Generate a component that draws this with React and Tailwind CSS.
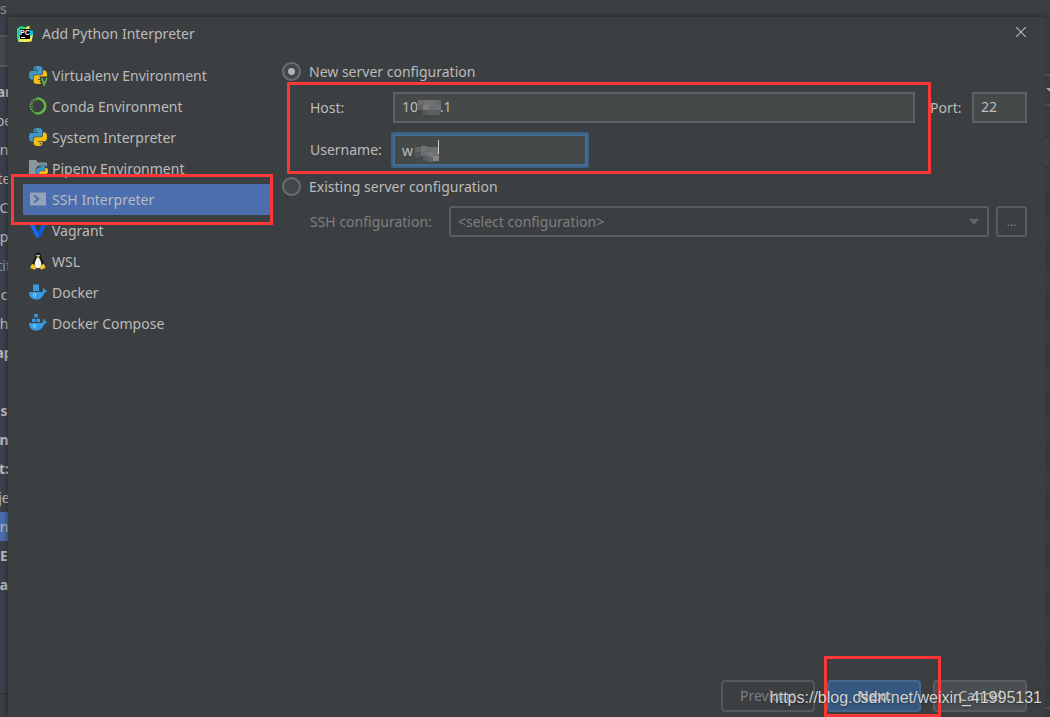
import React from "react"
import clsx from "clsx"

const PYTHON_HALF =
  "M14.25.18l.9.2.73.26.59.3.45.32.34.34.25.34.16.33.1.3.04.26.02.2-.01.13V8.5l-.05.63-.13.55-.21.46-.26.38-.3.31-.33.25-.35.19-.35.14-.33.1-.3.07-.26.04-.21.02H8.77l-.69.05-.59.14-.5.22-.41.27-.33.32-.27.35-.2.36-.15.37-.1.35-.07.32-.04.27-.02.21v3.06H3.17l-.21-.03-.28-.07-.32-.12-.35-.18-.36-.26-.36-.36-.35-.46-.32-.59-.28-.73-.21-.88-.14-1.05-.05-1.23.06-1.22.16-1.04.24-.87.32-.71.36-.57.4-.44.42-.33.42-.24.4-.16.36-.1.32-.05.24-.01h.16l.06.01h8.16v-.83H6.18l-.01-2.75-.02-.37.05-.34.11-.31.17-.28.25-.26.31-.23.38-.2.44-.18.51-.15.58-.12.64-.1.71-.06.77-.04.84-.02 1.27.05zm-6.3 1.98l-.23.33-.08.41.08.41.23.34.33.22.41.09.41-.09.33-.22.23-.34.08-.41-.08-.41-.23-.33-.33-.22-.41-.09-.41.09z"

const PythonMark = () => (
  <>
    <path d={PYTHON_HALF} fill="#4295c4" />
    <path d={PYTHON_HALF} fill="#f2bf12" transform="rotate(180 12 12)" />
  </>
)

const PythonIcon = () => (
  <svg viewBox="0 0 24 24" className="size-[18px]">
    <PythonMark />
  </svg>
)

const VirtualenvIcon = () => (
  <svg viewBox="0 0 18 18" className="size-[18px] overflow-visible">
    <g transform="scale(.75)">
      <PythonMark />
    </g>
    <path d="M10.4 10.5h8v8.5h-6z" fill="#3c3f41" />
    <path d="M12.6 12l2.6 6.6L17.9 12" fill="none" stroke="#62b543" strokeWidth="1.6" />
  </svg>
)

const CondaIcon = () => (
  <svg viewBox="0 0 18 18" className="size-[18px]" fill="none" stroke="#62b543">
    <path d="M8 1.6A7.4 7.4 0 1 1 6 15.8" strokeWidth="2.4" />
    <path d="M8 1.6A7.4 7.4 0 0 0 6 15.8" strokeWidth="1.6" strokeDasharray="1.7 .9" />
    <path d="M8 3.6A5.4 5.4 0 0 0 6 13.7" strokeWidth="1" strokeDasharray="1.2 1.2" />
  </svg>
)

const PipenvIcon = () => (
  <svg viewBox="0 0 18 18" className="size-[18px] overflow-visible">
    <path d="M0 1h7l2 2.5h9V16H0z" fill="#8c979e" />
    <circle cx="13" cy="12" r="6.5" fill="#3c3f41" />
    <g transform="translate(7 6) scale(.5)">
      <PythonMark />
    </g>
  </svg>
)

const SshIcon = () => (
  <svg viewBox="0 0 18 18" className="size-[18px]">
    <path d="M1 2.5h16v13H1z" fill="#93a2b8" />
    <path d="M5.2 5.5L9.2 9l-4 3.5" fill="none" stroke="#4b6eaf" strokeWidth="2" />
  </svg>
)

const VagrantIcon = () => (
  <svg viewBox="0 0 18 18" className="size-[18px]">
    <path d="M1 1.5L5.5 1v3L9 11.5 12.5 4V1L17 1.5V4l-5.5 11.5L9 17l-2.5-1.5L1 4z" fill="#1868f2" />
    <path d="M9 11.5L12.5 4V2.5L17 1.5V4l-5.5 11.5L9 17z" fill="#1459c9" />
  </svg>
)

const LinuxIcon = () => (
  <svg viewBox="0 0 18 18" className="size-[18px]">
    <path d="M9 .3c2 0 3 1.3 3 3.2 0 2.3.8 3 1.9 5 1 1.9 1.3 4 .4 6L9 16.8 3.7 14.5c-.9-2-.4-4.2.6-6C5.3 6.6 6 5.7 6 3.5 6 1.6 7 .3 9 .3z" fill="#17191a" />
    <path d="M9 5.800c1.400 0 1.800 1.200 2.500 2.900.8 1.900 1.200 3.600.6 5.300-.5 1.500-1.600 2.200-3.100 2.200s-2.600-.7-3.100-2.200c-.6-1.700-.2-3.400.6-5.300C7.200 7 7.600 5.800 9 5.800z" fill="#f4f4f4" />
    <circle cx="8" cy="3.600" r=".8" fill="#eee" />
    <circle cx="10" cy="3.600" r=".8" fill="#eee" />
    <path d="M7.300 5.100L9 4.300l1.700.8L9 6.300z" fill="#f8c22c" />
    <path d="M3.500 11.800l1.600.9 2 2.800c.3 1.200-.6 2.100-1.900 1.900l-3.700-1.100.2-2.500z" fill="#f8c22c" />
    <path d="M14.500 11.800l-1.600.9-1.800 2.800c-.3 1.200.6 2.100 1.800 1.900l3.600-1.600-.6-2z" fill="#f8c22c" />
  </svg>
)

const Whale = () => (
  <>
    <path d="M0 9h13.500c.7-.7.700-2.200.2-3.200l1-.8c.8.700 1.300 1.500 1.300 2.400.7-.1 1.600 0 2.200.4-.5 1-1.400 1.500-2.700 1.600C14.300 13.500 11.500 16.500 7 16.500 2.500 16.500 0 13.500 0 9z" fill="#369be6" />
    <ellipse cx="5.500" cy="12" rx="1.100" ry="1.600" fill="none" stroke="#a9d4ee" strokeWidth=".9" />
  </>
)

const DockerIcon = () => (
  <svg viewBox="0 0 18 18" className="size-[18px]">
    <path d="M4 1.500h6V8H4z" fill="#369be6" />
    <Whale />
  </svg>
)

const ComposeIcon = () => (
  <svg viewBox="0 0 18 18" className="size-[18px]">
    <path d="M5.200 0h3.600v3.300H5.200zM3 4.700h3.500V8H3zM7.500 4.700H11V8H7.500z" fill="#369be6" />
    <Whale />
  </svg>
)

const PyCharmIcon = () => (
  <svg viewBox="0 0 16 16" className="size-4">
    <path d="M0 2.500L4 0l6 1.500L14 6l-2 9.500L2 16 0 12z" fill="#21d789" />
    <path d="M10 .5L12.500 0v3L16 9l-1.500 6.500L8 16l-7-.5L3 11z" fill="#f4f052" />
    <path d="M12.500 4L16 5v4l-3 1z" fill="#07c3f2" />
    <path d="M3 3h10v10H3z" fill="#000" />
    <text x="3" y="9" fontSize="7" fontWeight="700" fill="#fff" fontFamily="Liberation Sans, sans-serif">PC</text>
    <path d="M4 11h4v1H4z" fill="#fff" />
  </svg>
)

const CloseIcon = () => (
  <svg viewBox="0 0 10 10" className="size-[10px]" stroke="#bbbbbb" strokeWidth="1.1">
    <path d="M0 0l10 10M10 0L0 10" />
  </svg>
)

// Red frame drawn over the part of the dialog the reader should look at
const Highlight = ({ className }) => (
  <span className={clsx("pointer-events-none absolute z-10 border-3 border-[#fb3837]", className)} />
)

const environments = [
  { label: "Virtualenv Environment", icon: VirtualenvIcon },
  { label: "Conda Environment", icon: CondaIcon },
  { label: "System Interpreter", icon: PythonIcon },
  { label: "Pipenv Environment", icon: PipenvIcon },
  { label: "SSH Interpreter", icon: SshIcon, selected: true },
  { label: "Vagrant", icon: VagrantIcon },
  { label: "WSL", icon: LinuxIcon },
  { label: "Docker", icon: DockerIcon },
  { label: "Docker Compose", icon: ComposeIcon },
]

const settingsTree = [
  { text: "ar", bold: true },
  { text: "be" },
  { text: "n" },
  { text: "te" },
  { text: "C" },
  { text: "p" },
  { text: "tif", link: true },
  { text: "c" },
  { text: "h" },
  { text: "ap", bold: true },
  { text: "" },
  { text: "s", bold: true },
  { text: "n", bold: true },
  { text: "t:", bold: true },
  { text: "je" },
  { text: "n", selected: true },
  { text: "E", bold: true },
  { text: "a", bold: true },
]

const SettingsEdge = () => (
  <aside className="flex w-2 shrink-0 flex-col overflow-hidden bg-[#3d414b]">
    <div className="mt-[18px] h-8 border-y-2 border-[#55585a] bg-[#45494a]" />
    <ul className="mt-2.5 flex-1">
      {settingsTree.map((row, i) => (
        <li
          key={i}
          className={clsx(
            "flex h-[29px] items-center justify-center",
            row.bold && "font-bold",
            row.link && "text-[#6f9fd0]",
            row.selected && "bg-[#4b6eaf]"
          )}
        >
          {row.text}
        </li>
      ))}
    </ul>
    <div className="h-6 border-t border-[#2f3133] bg-[#3c3f41]" />
  </aside>
)

const PackagesEdge = () => (
  <aside className="flex w-[5px] shrink-0 flex-col overflow-hidden bg-[#383b3d] pt-[57px]">
    <div className="flex h-8 shrink-0 items-center justify-end border-y-2 border-[#4b4e50]">
      <svg viewBox="0 0 4 4" className="size-1" fill="#a0a2a4">
        <path d="M0 0h4v4z" />
      </svg>
    </div>
    <div className="mt-[30px] h-8 shrink-0 border-y border-[#2d2f31] bg-[#3c3f41]" />
    <div className="flex-1 bg-[repeating-linear-gradient(#393c3e_0px,#393c3e_25px,#353739_25px,#353739_50px)]" />
    <div className="h-[45px] shrink-0 border-t border-[#2d2f31]">
      <div className="mt-5 border-t border-[#2d2f31]" />
      <div className="mt-[13px] border-t-2 border-[#4b4e50]" />
    </div>
  </aside>
)

const Sidebar = () => (
  <nav className="w-[247px] shrink-0">
    <ul>
      {environments.map(({ label, icon: Icon, selected }) => (
        <li key={label} className="relative">
          <button
            type="button"
            className={clsx(
              "flex h-[31px] w-full items-center gap-[5px] pl-1.5 [&>svg]:mb-px",
              selected && "bg-[#4b6eaf]"
            )}
          >
            <Icon />
            {label}
          </button>
          {selected && <Highlight className="-inset-y-[10px] -left-3 -right-[3px]" />}
        </li>
      ))}
    </ul>
  </nav>
)

const Radio = ({ id, label, defaultChecked }) => (
  <div className="flex h-[23px] items-center gap-2">
    <input
      type="radio"
      name="server"
      id={id}
      defaultChecked={defaultChecked}
      className="size-[19px] appearance-none rounded-full border-2 border-[#6b6d6e] bg-[#43484a] checked:bg-[radial-gradient(circle,#b4b4b4_3px,#43484a_4px)]"
    />
    <label htmlFor={id}>{label}</label>
  </div>
)

const Mosaic = ({ cells, caret, className }) => (
  <svg viewBox="0 0 24 24" className={clsx("pointer-events-none absolute size-6", className)}>
    {cells.map(([x, y, fill]) => (
      <rect key={`${x}-${y}`} x={x} y={y} width="6" height="5" fill={fill} />
    ))}
    {caret && <path d="M23 0h1v14h-1z" fill="#d0d0d0" />}
  </svg>
)

const hostCells = [
  [1, 4, "#6a6c6d"], [7, 4, "#747474"], [13, 4, "#717172"], [18, 4, "#66686a"],
  [0, 9, "#5d6062"], [6, 9, "#7d7b7a"], [12, 9, "#6c6d6e"], [18, 9, "#737373"],
  [6, 14, "#55595b"], [12, 14, "#606264"], [17, 14, "#5b5e60"],
]

const userCells = [
  [0, 7, "#606364"], [6, 6, "#74746f"], [12, 7, "#6b6c6c"], [17, 7, "#707070"],
  [0, 12, "#55595b"], [6, 11, "#6b6d6e"], [12, 12, "#777675"], [18, 12, "#727272"],
  [8, 16, "#585c5e"], [13, 17, "#62656a"], [18, 16, "#858585"],
]

const ServerForm = () => (
  <main className="min-w-0 flex-1">
    <Radio id="new" label="New server configuration" defaultChecked />
    <div className="relative -mt-px pb-2 pl-7 pt-2.5">
      <div className="flex items-center">
        <label htmlFor="host" className="w-[83px]">Host:</label>
        <div className="relative flex-1">
          <input
            id="host"
            defaultValue="10      .1"
            className="block h-[31px] w-full border-2 border-[#5e6162] bg-[#45494a] px-[7px] pb-0.5 outline-none"
          />
          <Mosaic cells={hostCells} className="left-6 top-1" />
        </div>
        <label htmlFor="port" className="ml-[15px] w-[42px]">Port:</label>
        <input
          id="port"
          defaultValue="22"
          className="h-[31px] w-[55px] border-2 border-[#5e6162] bg-[#45494a] px-[7px] pb-0.5 outline-none"
        />
      </div>
      <div className="mt-[11px] flex items-center">
        <label htmlFor="username" className="w-[83px]">Username:</label>
        <div className="relative w-[194px]">
          <input
            id="username"
            defaultValue="w"
            className="block h-8 w-full rounded-[1px] border-2 border-[#466d94] bg-[#45494a] px-[7px] outline-none ring-2 ring-[#3d6185]"
          />
          <Mosaic cells={userCells} caret className="left-[22px] top-1.5" />
        </div>
      </div>
      <Highlight className="inset-y-0 left-[5px] right-24" />
    </div>
    <div className="mt-px">
      <Radio id="existing" label="Existing server configuration" />
    </div>
    <div className="mt-2 flex items-center pl-7 text-[#7d7f80]">
      <label htmlFor="ssh" className="w-[139px]">SSH configuration:</label>
      <div className="relative flex-1">
        <select
          id="ssh"
          disabled
          className="block h-[31px] w-full appearance-none rounded-[3px] border-2 border-[#5a5d5e] px-[7px]"
        >
          <option>&lt;select configuration&gt;</option>
        </select>
        <svg viewBox="0 0 10 6" className="pointer-events-none absolute right-2.5 top-[13px] h-1.5 w-2.5" fill="#646768">
          <path d="M0 0h10L5 6z" />
        </svg>
      </div>
      <button type="button" disabled className="ml-[7px] h-[31px] w-[31px] rounded-[3px] border-2 border-[#5a5d5e] text-xs">
        ...
      </button>
    </div>
  </main>
)

const Footer = () => (
  <footer className="relative flex justify-end gap-3 pb-[5px] pr-[18px]">
    <button type="button" disabled className="h-8 w-[94px] rounded border-2 border-[#54585a] text-[#7d7f80]">
      Previous
    </button>
    <div className="relative">
      <button type="button" className="block h-8 w-[94px] rounded border-2 border-[#43688c] bg-[#365880] font-bold">
        Next
      </button>
      <Highlight className="-bottom-[5px] -left-[3px] -right-5 -top-6" />
    </div>
    <button type="button" className="h-8 w-[94px] rounded border-2 border-[#5a5d5e] bg-[#4a4e50]">
      Cancel
    </button>
    <span className="pointer-events-none absolute bottom-[7px] right-[3px] z-20 font-['Liberation_Sans',sans-serif] text-base text-[#d2d3d3] [text-shadow:0_1px_2px_#00000066]">
      https://blog.csdn.net/weixin_41995131
    </span>
  </footer>
)

const App = () => {
  return (
    <div className="flex min-h-screen flex-col bg-[#3c3f41] font-['Noto_Sans','Open_Sans',sans-serif] text-sm text-[#bbbbbb]">
      <div className="flex h-[17px] items-center overflow-hidden text-[#8b8d8f]">s</div>
      <div className="flex flex-1">
        <SettingsEdge />
        <section className="flex min-w-0 flex-1 flex-col bg-[#3c3f41] shadow-[0_0_6px_#00000080]">
          <header className="flex h-[34px] items-center gap-[9px] pl-[9px] pr-[19px]">
            <PyCharmIcon />
            <h1 className="flex-1">Add Python Interpreter</h1>
            <button type="button" aria-label="Close" className="pb-1">
              <CloseIcon />
            </button>
          </header>
          <div className="flex flex-1 gap-3 pl-[15px] pr-[18px] pt-[9px]">
            <Sidebar />
            <ServerForm />
          </div>
          <Footer />
        </section>
        <PackagesEdge />
      </div>
    </div>
  )
}

export default App
